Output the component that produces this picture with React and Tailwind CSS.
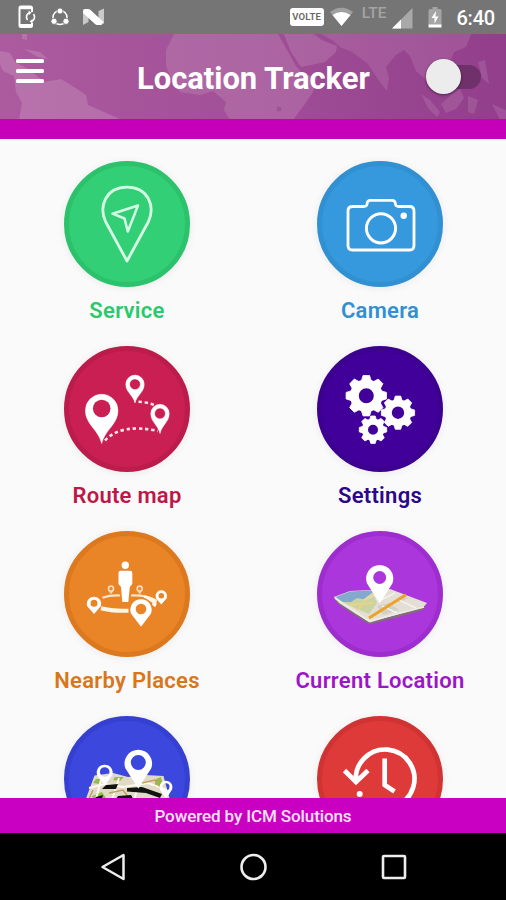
import React from "react";

function Pin({ x, y, r, hole, tip, fill = "#fff" }) {
  // y is the centre of the round head, tip is the y of the point
  const side = r * 0.94;
  const drop = r * 0.42;
  const d = `M${x} ${tip}L${x - side} ${y + drop}A${r} ${r} 0 1 1 ${x + side} ${y + drop}Z M${x - hole} ${y}a${hole} ${hole} 0 1 0 ${hole * 2} 0a${hole} ${hole} 0 1 0 ${-hole * 2} 0Z`;
  return <path d={d} fill={fill} fillRule="evenodd" strokeLinejoin="round" />;
}

function CurvedPin({ x, y, r, hole, tip }) {
  const h = tip - y;
  const d = `M${x} ${tip}C${x - r * 0.2} ${y + h * 0.58} ${x - r} ${y + h * 0.42} ${x - r} ${y}A${r} ${r} 0 0 1 ${x + r} ${y}C${x + r} ${y + h * 0.42} ${x + r * 0.2} ${y + h * 0.58} ${x} ${tip}Z M${x - hole} ${y}a${hole} ${hole} 0 1 0 ${hole * 2} 0a${hole} ${hole} 0 1 0 ${-hole * 2} 0Z`;
  return <path d={d} fill="#fff" fillRule="evenodd" stroke="#fff" strokeWidth="0.5" />;
}

function Gear({ x, y, r, hole }) {
  const body = r * 0.81;
  const w = r * 0.36;
  return (
    <g transform={`translate(${x} ${y})`} fill="#fff">
      <circle r={(body + hole) / 2} fill="none" stroke="#fff" strokeWidth={body - hole} />
      {[0, 45, 90, 135, 180, 225, 270, 315].map((a) => (
        <path
          key={a}
          transform={`rotate(${a})`}
          d={`M${-w * 0.68} ${-body * 0.9}L${-w * 0.45} ${-r}H${w * 0.45}L${w * 0.68} ${-body * 0.9}Z`}
          stroke="#fff"
          strokeWidth="0.8"
          strokeLinejoin="round"
        />
      ))}
    </g>
  );
}

const ServiceIcon = () => (
  <g fill="none" stroke="#d6fbe4" strokeWidth="2.8" strokeLinejoin="round">
    <path d="M63 100 41.500 60.500C34.500 45 42 26.200 63 26.200S91.500 45 84.500 60.500Z" />
    <path d="M74 44.500 48.500 52.700 60.500 57.500 63.800 70.500Z" strokeWidth="2.5" />
  </g>
);

const CameraIcon = () => (
  <g fill="none" stroke="#fff" strokeWidth="2.8" strokeLinejoin="round">
    <path d="M35 45.500H47Q49.500 45.500 50 43.500Q50 39.300 53.500 39.300H75Q78.500 39.300 78.500 43.500Q79 45.500 81.500 45.500H92.500Q97 45.500 97 50V84.500Q97 89 92.500 89H35.500Q31 89 31 84.500V50Q31 45.500 35.500 45.500" />
    <circle cx="64" cy="67.300" r="14.600" strokeWidth="3" />
    <circle cx="86.700" cy="54.700" r="3.200" fill="#fff" stroke="none" />
  </g>
);

const RouteIcon = () => (
  <g>
    <path d="M41 94.500Q57 77 94 85" fill="none" stroke="#fff" strokeOpacity="0.9" strokeWidth="2.6" strokeDasharray="3.4 2.800" />
    <path d="M74.500 55.800Q84 56 94 60.500" fill="none" stroke="#fff" strokeOpacity="0.9" strokeWidth="2.500" strokeDasharray="3.400 2.800" />
    <CurvedPin x={37.7} y={64.5} r={16.3} hole={0} tip={97.5} />
    <circle cx="37.700" cy="62.500" r="8.800" fill="#c91f52" />
    <CurvedPin x={71} y={38.3} r={9.2} hole={5.4} tip={57} />
    <CurvedPin x={96} y={67.5} r={9.2} hole={5.4} tip={87.5} />
  </g>
);

const SettingsIcon = () => (
  <g>
    <Gear x={49.3} y={49.7} r={20.2} hole={7.5} />
    <Gear x={81} y={66.7} r={16.6} hole={6.2} />
    <Gear x={56} y={83.7} r={13.7} hole={5} />
  </g>
);

const NearbyIcon = () => (
  <g>
    <g fill="none" stroke="#fff7ea">
      <path d="M38.500 66.800Q46 64 56 64.500" strokeWidth="2.200" strokeOpacity="0.85" />
      <path d="M37 77.300Q48 80.300 64.500 79.700" strokeWidth="4" />
      <path d="M67 64.500Q83 64 93 70" strokeWidth="2.200" strokeOpacity="0.85" />
      <path d="M80 66.300Q94 69.500 89.500 75" strokeWidth="4" />
      <circle cx="47" cy="57.700" r="2.500" strokeWidth="1.700" strokeOpacity="0.75" />
      <circle cx="75.700" cy="57.700" r="2.500" strokeWidth="1.700" strokeOpacity="0.75" />
    </g>
    <path d="M45 60.500H49L47 63.500ZM73.700 60.500H77.700L75.700 63.500Z" fill="#f7cfa3" />
    <circle cx="61.300" cy="34.300" r="3.700" fill="#fff" />
    <path d="M56.500 39.700H66.500Q68.300 39.700 68.300 42V53L65.800 56 64.300 71H58.300L57 56 54.500 53V42Q54.500 39.700 56.500 39.700Z" fill="#fff" />
    <Pin x={97.3} y={64.7} r={5.8} hole={2.8} tip={73.5} />
    <Pin x={30} y={72.3} r={7.2} hole={3.5} tip={83} />
    <circle cx="77" cy="78.300" r="11.800" fill="#e98427" />
    <Pin x={77} y={78} r={10.7} hole={5.3} tip={95.7} />
  </g>
);

const CurrentIcon = () => (
  <g>
    <path d="M17 67 22 74 52 93.500 80 86.500 106 79 109.500 72 54 86Z" fill="#806e78" />
    <path d="M16.700 66 33 60 73 58 110 72 106 76.500 80 83.500 53 91.500 39 83 22 72Z" fill="#e3dfd6" />
    <path d="M18.500 66 33 60.500 59 59 47 68 33 71.500 25 71Z" fill="#83a9cf" />
    <path d="M25 71 34 71 40 67 50 69 57 65 60 72 52 83 42 79Z" fill="#c9d4a2" />
    <path d="M41 79 47 70 60 60M32 74 57 72" fill="none" stroke="#e8d487" strokeWidth="1.800" />
    <path d="M60 75 72 72 82 79 66 84ZM84 65 91 67 84 71 77 70Z" fill="#d2d0ca" />
    <path d="M65 75 80 82M78 62 64 69M82 69 99 77" fill="none" stroke="#f4f1e9" strokeWidth="1.500" />
    <path d="M18 67 52 90 107 76" fill="none" stroke="#f0ece3" strokeWidth="1.800" />
    <path d="M52 87 89 63.700" stroke="#eda328" strokeWidth="3" />
    <Pin x={62.7} y={46.5} r={13.6} hole={6.5} tip={72.5} />
  </g>
);

const MapIcon = () => (
  <g>
    <path d="M30.500 59.500 49 57 64 61 81 59 99.500 60 107 88H20Z" fill="#e2dac8" />
    <path d="M32 63 39 63 35 68 29 67ZM51 61 60 61 56 65 49 64ZM92 63 97 61 99 70 90 71ZM28 80 38 76 42 82 30 85Z" fill="#91bd4c" />
    <path d="M25 72 41 68 59 71 84 67 103 74M38 60 32 83M73 72 70 86M55 62 48 84" fill="none" stroke="#fff9ef" strokeWidth="2" />
    <path d="M45 77 59 74 65 82M78 67 91 64 97 72M29 74 25 83" fill="none" stroke="#c79f5c" strokeWidth="1.500" />
    <path d="M42 69 54 68 52 73 38 73ZM63 72 78 71 98 78 96 82 82 77 63 75.500ZM32 81 39 79 37 86 28 86ZM54 80 67 79 71 86H50Z" fill="#11130d" />
    <Pin x={40.7} y={56} r={8} hole={4.8} tip={69.5} />
    <Pin x={74.3} y={46.5} r={13.8} hole={7.5} tip={72.5} />
    <Pin x={102} y={70.7} r={6.4} hole={3.5} tip={83} />
  </g>
);

const HistoryIcon = () => (
  <g fill="none" stroke="#fff" strokeWidth="4.700">
    <path d="M39 66A29.300 29.300 0 1 1 54 88.500" />
    <path d="M27.500 54.500 39 66 51 54.500" />
    <path d="M67.700 42.500V69L77.500 75.500" />
    <circle cx="42.700" cy="78" r="3" fill="#fff" stroke="none" />
  </g>
);

const items = [
  { label: "Service", Icon: ServiceIcon, circle: "bg-[#32cf76] border-[#2cc26c]", text: "text-[#2bc96d]" },
  { label: "Camera", Icon: CameraIcon, circle: "bg-[#3699dd] border-[#3090d2]", text: "text-[#3190d2]" },
  { label: "Route map", Icon: RouteIcon, circle: "bg-[#c91f52] border-[#bb1c4b]", text: "text-[#bd1748]" },
  { label: "Settings", Icon: SettingsIcon, circle: "bg-[#41009a] border-[#3c018f]", text: "text-[#2c0788]" },
  { label: "Nearby Places", Icon: NearbyIcon, circle: "bg-[#e98427] border-[#dc781d]", text: "text-[#d9761c]" },
  { label: "Current Location", Icon: CurrentIcon, circle: "bg-[#aa36dc] border-[#9e2dce]", text: "text-[#9c16c8]" },
  { Icon: MapIcon, circle: "bg-[#3c47dd] border-[#3640d0]" },
  { Icon: HistoryIcon, circle: "bg-[#df3a3a] border-[#d03333]" },
];

function MenuItem({ label, Icon, circle, text }) {
  return (
    <div className="flex flex-col items-center h-[185px]">
      <div className={`w-[126px] h-[126px] shrink-0 rounded-full border-[5px] shadow-[0_1px_8px_rgba(0,0,0,0.07)] ${circle}`}>
        <svg viewBox="0 0 126 126" className="w-[126px] h-[126px] -m-[5px] max-w-none">
          <Icon />
        </svg>
      </div>
      {label && (
        <span className={`mt-[10px] pl-px text-[22px] leading-7 font-semibold tracking-[0.27px] whitespace-nowrap ${text}`}>{label}</span>
      )}
    </div>
  );
}

function StatusBar() {
  return (
    <div className="h-[34px] shrink-0 bg-[#757575] flex items-center justify-between pl-[18px] pr-[11px] text-white">
      <div className="flex items-center">
        {/* phone sync */}
        <svg width="19" height="24" viewBox="0 0 19 24" fill="none" stroke="#fff">
          <path d="M14 7V3Q14 1.500 12.500 1.500H3Q1.500 1.500 1.500 3V20.500Q1.500 22 3 22H12.500Q14 22 14 20.500V18" strokeWidth="2" />
          <path d="M2 2.700H13.500M2 20.500H13.500" strokeWidth="3" />
          <path d="M12 7.500A4.700 4.700 0 0 0 9.500 15M13 16.500A4.700 4.700 0 0 0 15.500 9" strokeWidth="1.700" />
          <path d="M10.500 5.500 13.500 7.500 11 10ZM14.500 14 11.500 16.500 14.500 18.500Z" fill="#fff" stroke="none" />
        </svg>
        <svg className="ml-[14px]" width="18" height="18" viewBox="0 0 18 18">
          <circle cx="9" cy="9.500" r="7" fill="none" stroke="#fff" strokeWidth="1.500" />
          <g fill="#fff" stroke="#757575" strokeWidth="0.800">
            <circle cx="9" cy="3" r="3" />
            <circle cx="3" cy="13.300" r="3.100" />
            <circle cx="15" cy="13.300" r="3.100" />
          </g>
        </svg>
        <svg className="ml-[13px]" width="23" height="18" viewBox="0 0 23 18">
          <path d="M1 2 6.500 6V14L1 17ZM16.500 3 22 0.500V16L16.500 13Z" fill="#c9c9c9" />
          <path d="M1 3Q1 1 3 1H6Q7.500 1 8.500 2L21.500 14 19.500 17H15Q14 17 13 16L1 5Z" fill="#fff" />
        </svg>
      </div>
      <div className="flex items-center">
        <span className="w-[34px] h-[18px] rounded-[3px] bg-white text-[#666] text-[9.5px] leading-[18px] font-semibold text-center tracking-[0.200px]">VOLTE</span>
        <svg className="ml-[5px]" width="25" height="20" viewBox="0 0 25 20">
          <path d="M1 5Q12.500-3.500 24 5L12.500 19Z" fill="#a0a0a0" />
          <path d="M3.500 8Q12.500 2 21.500 8L12.500 19Z" fill="#fff" />
        </svg>
        <span className="ml-[8px] -mt-[9px] text-[15.5px] leading-4 font-medium text-[#a4a4a4]">LTE</span>
        <svg className="ml-[6px] mt-[2px]" width="21" height="21" viewBox="0 0 21 21">
          <path d="M20.500 0V20.500H0Z" fill="#a9a9a9" />
          <path d="M9 11.500V20.500H0Z" fill="#fff" />
        </svg>
        <svg className="ml-[15px]" width="14" height="21" viewBox="0 0 14 21">
          <path d="M4.500 0H9.500V2H12Q13.500 2 13.500 3.500V18H0.500V3.500Q0.500 2 2 2H4.500Z" fill="#a5a5a5" />
          <path d="M0.500 17.500H13.500V20.500H0.500ZM8 4 3.500 11H6.500V16.500L10.500 9.500H7.500Z" fill="#fff" />
        </svg>
        <span className="ml-[14px] mt-[2px] text-[20px] leading-6 font-medium tracking-[-0.200px]">6:40</span>
      </div>
    </div>
  );
}

function Header() {
  return (
    <header className="relative h-[85px] shrink-0 overflow-hidden bg-linear-to-r from-[#ac5b9f] via-[#a14f97] to-[#923e8b]">
      <svg className="absolute inset-0 blur-[0.7px]" width="506" height="85" viewBox="0 0 506 85">
        <g fill="#d0a5c6">
          <g fillOpacity="0.32">
            <path d="M0 17 10 19 15 28 30 36 44 48 61 45 74 53 86 61 88 71 104 78 122 86H19L22 69 16 58 14 42 3 37 0 30ZM22 0H27V6L22 5ZM24 15 40 18 48 25 38 23Z" />
          </g>
          <g fillOpacity="0.26">
            <path d="M175 -2H277L287 16 296 32 303 40 317 43 313 58 305 70 293 86H230L224 76 226 68 213 57 200 61 180 58 171 44 166 32V16Z" />
            <path d="M283 -2H311L322 6 337 12 336 18 325 28 301 33 291 18Z" />
          </g>
          <g fillOpacity="0.2">
            <path d="M317 -2H472L466 13 454 18 449 31 437 41 426 46 416 37 410 22 404 16 396 21 386 33 389 44 387 57 379 47 368 30 352 18 340 13 332 6Z" />
            <path d="M421 60 430 66 440 78 437 83 428 74ZM441 70 452 60 460 55 464 64 456 75 446 79ZM459 42 469 33 475 45 466 54ZM478 28 485 26 489 50 482 44ZM468 62 478 66 474 80 468 78ZM492 70 506 76V86H500Z" />
          </g>
        </g>
        <circle cx="279" cy="75" r="2.500" fill="#8d4785" fillOpacity="0.5" />
      </svg>
      <div className="relative flex items-center h-full pl-[16px] pr-[25px]">
        <button aria-label="Menu" className="flex flex-col gap-[6px] w-[28px] -mt-[11px]">
          <span className="h-[4px] rounded-[1.5px] bg-white"></span>
          <span className="h-[4px] rounded-[1.5px] bg-white"></span>
          <span className="h-[4px] rounded-[1.5px] bg-white"></span>
        </button>
        <h1 className="ml-[93px] mt-[4px] text-[31px] leading-9 font-bold tracking-[-0.05px] text-white whitespace-nowrap">Location Tracker</h1>
        <div className="ml-auto w-[55px] h-[36px] flex items-center justify-end">
          <div className="w-[44px] h-[24px] rounded-full bg-[#70306c] flex items-center">
            <span className="w-[35px] h-[35px] shrink-0 -ml-[11px] rounded-full bg-[#ececec] shadow-[0_1px_3px_rgba(0,0,0,0.45)]"></span>
          </div>
        </div>
      </div>
    </header>
  );
}

export default function App() {
  return (
    <div className="w-[506px] h-[900px] overflow-hidden flex flex-col bg-[#fafafa] font-['Roboto',sans-serif]">
      <StatusBar />
      <Header />
      <div className="h-[20px] shrink-0 bg-[#c500b8]"></div>

      {/* MENU GRID */}
      <main className="flex-1 min-h-0 overflow-hidden grid grid-cols-2 content-start pt-[22px]">
        {items.map((item, i) => (
          <MenuItem key={i} {...item} />
        ))}
      </main>

      <footer className="h-[35px] shrink-0 pt-[2px] bg-[#c900c1] flex items-center justify-center text-[17px] tracking-[-0.1px] text-[#ffe0fb] font-medium">
        Powered by ICM Solutions
      </footer>

      {/* ANDROID NAV */}
      <nav className="h-[67px] shrink-0 bg-black flex items-center justify-between pl-[100px] pr-[98px]">
        <svg width="28" height="28" viewBox="0 0 28 28" fill="none" stroke="#eee" strokeWidth="2.500" strokeLinejoin="round">
          <path d="M2.500 14 23.500 2V26Z" />
        </svg>
        <svg width="28" height="28" viewBox="0 0 28 28" fill="none" stroke="#eee" strokeWidth="2.600">
          <circle cx="13.500" cy="14" r="12" />
        </svg>
        <svg width="28" height="28" viewBox="0 0 28 28" fill="none" stroke="#eee" strokeWidth="2.600">
          <rect x="3" y="3" width="22" height="22" rx="1" />
        </svg>
      </nav>
    </div>
  );
}
